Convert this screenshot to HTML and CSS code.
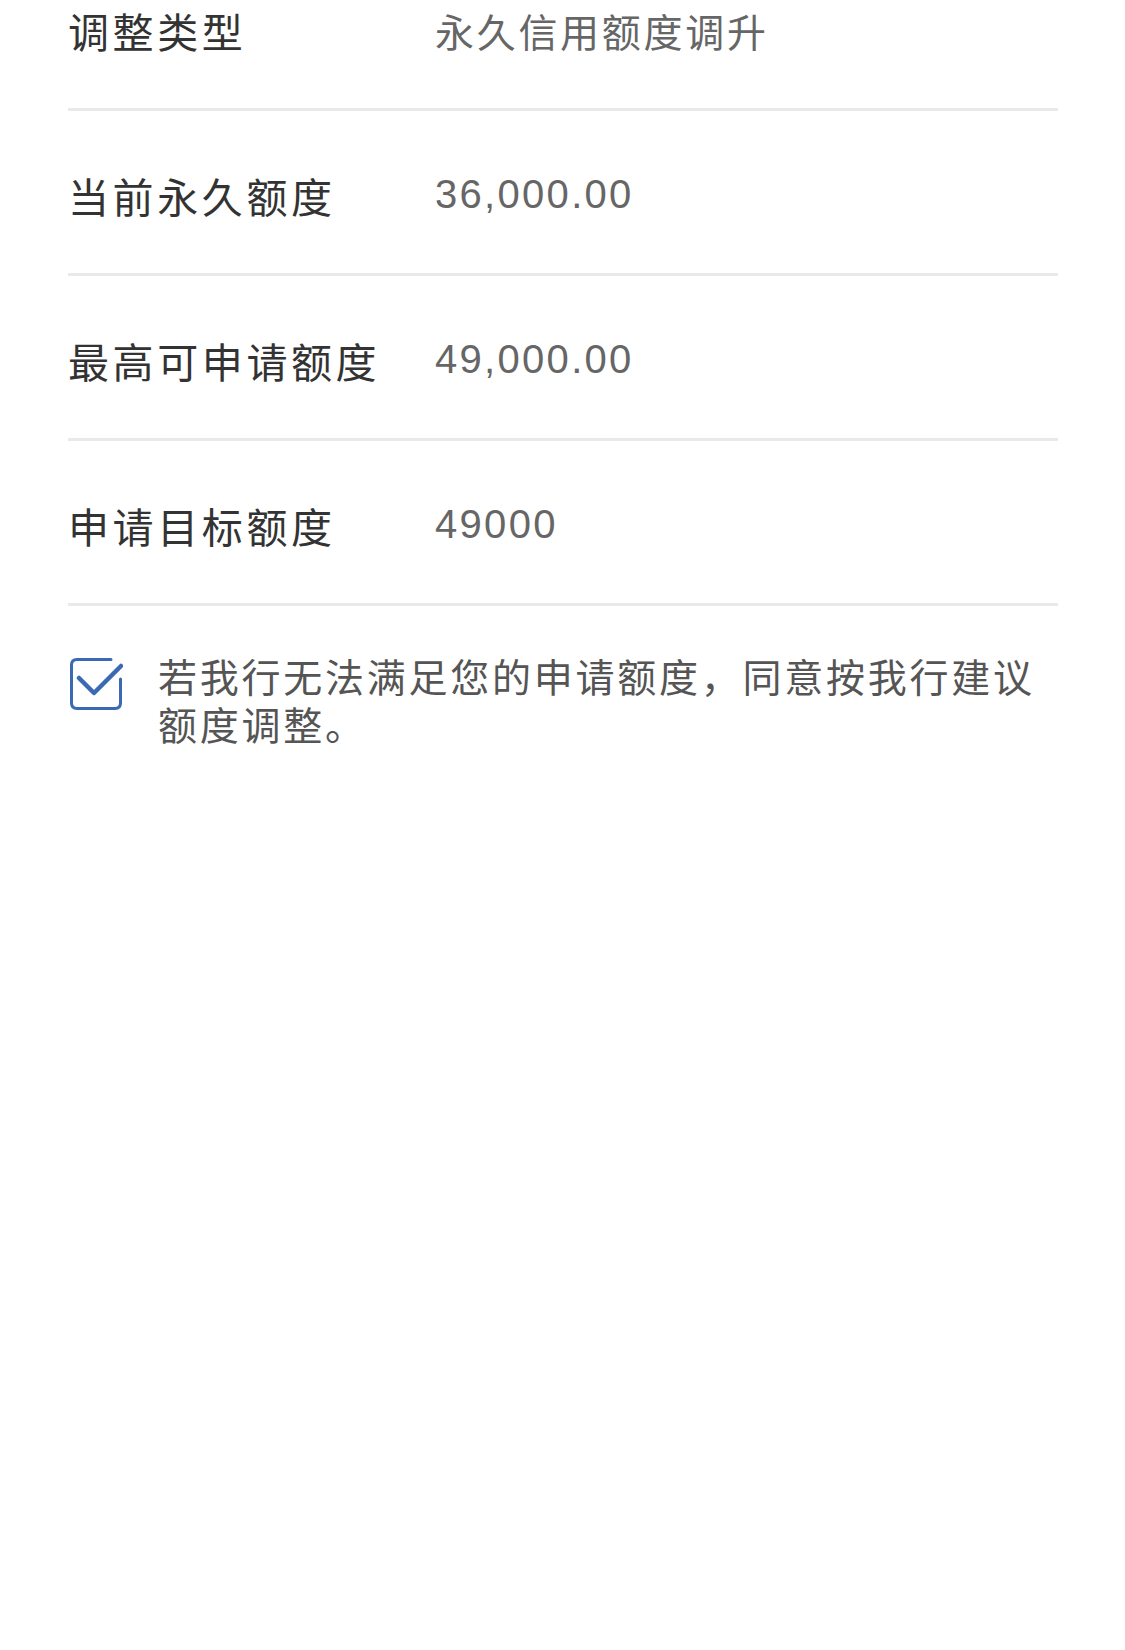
FILE: index.html
```html
<!DOCTYPE html>
<html lang="zh-CN">
<head>
    <meta charset="UTF-8">
    <meta name="viewport" content="width=device-width, initial-scale=1.0">
    <title>额度调整</title>
    <link rel="stylesheet" href="styles.css">
</head>
<body>
    <div class="list">
        <div class="row">
            <div class="label">调整类型</div>
            <div class="value">永久信用额度调升</div>
        </div>
        <div class="row">
            <div class="label">当前永久额度</div>
            <div class="value num">36,000.00</div>
        </div>
        <div class="row">
            <div class="label">最高可申请额度</div>
            <div class="value num">49,000.00</div>
        </div>
        <div class="row">
            <div class="label">申请目标额度</div>
            <div class="value num">49000</div>
        </div>
    </div>

    <div class="agree">
        <svg class="check" width="54" height="54" viewBox="0 0 54 54">
            <path d="M42 2.5 H8 Q2.5 2.5 2.5 8 V46 Q2.5 51.5 8 51.5 H46 Q51.5 51.5 51.5 46 V22" fill="none" stroke="#3b69b3" stroke-width="3" stroke-linecap="round"/>
            <path d="M10 21 L25 36 L52 9" fill="none" stroke="#3b69b3" stroke-width="4.5" stroke-linecap="round" stroke-linejoin="round"/>
        </svg>
        <p class="agree-text">若我行无法满足您的申请额度，同意按我行建议额度调整。</p>
    </div>
</body>
</html>
```

FILE: styles.css
```css
body {
    margin: 0;
    background-color: #fff;
    font-family: "Liberation Sans", "Noto Sans CJK SC", sans-serif;
}
.list {
    margin: -54px 67px 0 68px;
}
.row {
    display: flex;
    align-items: center;
    height: 165px;
    padding-top: 5px;
    box-sizing: border-box;
    border-bottom: 3px solid #e9e9e9;
}
.label {
    width: 367px;
    font-size: 41px;
    letter-spacing: 3.6px;
    color: #333;
}
.value {
    font-size: 39px;
    letter-spacing: 2.7px;
    color: #666;
}
.value.num {
    font-size: 40px;
    letter-spacing: 2.3px;
}
.agree {
    display: flex;
    align-items: flex-start;
    margin: 49px 67px 0 69px;
}
.check {
    flex: none;
    margin-top: 2px;
}
.agree-text {
    margin: 0 0 0 35px;
    font-size: 39px;
    line-height: 48px;
    letter-spacing: 2.75px;
    color: #555;
}
```
